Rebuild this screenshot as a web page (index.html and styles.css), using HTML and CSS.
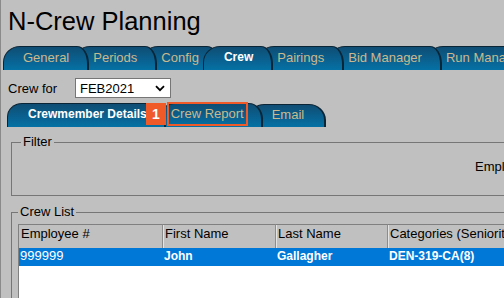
FILE: index.html
```html
<!DOCTYPE html>
<html>
<head>
<meta charset="utf-8">
<title>N-Crew Planning</title>
<link rel="stylesheet" href="styles.css">
</head>
<body>
<div class="page">
  <h1 class="title">N-Crew Planning</h1>
  <nav class="tabs">
    <span class="tab">General</span>
    <span class="tab">Periods</span>
    <span class="tab">Config</span>
    <span class="tab active">Crew</span>
    <span class="tab">Pairings</span>
    <span class="tab">Bid Manager</span>
    <span class="tab">Run Manager</span>
  </nav>
  <div class="crew-for">
    <span class="crew-for-label">Crew for</span>
    <div class="select">
      <span class="select-value">FEB2021</span>
      <svg class="chevron" width="10" height="7" viewBox="0 0 10 7"><path d="M1 1.2 L5 5.2 L9 1.2" fill="none" stroke="#000" stroke-width="1.8"/></svg>
    </div>
  </div>
  <div class="subtabs">
    <span class="subtab active details">Crewmember Details</span>
    <span class="subtab report">Crew Report</span>
    <span class="subtab email">Email</span>
    <span class="badge">1</span>
    <span class="highlight"></span>
  </div>
  <fieldset class="box filter">
    <legend>Filter</legend>
    <div class="filter-body">Employee #:</div>
  </fieldset>
  <fieldset class="box crewlist">
    <legend>Crew List</legend>
    <div class="grid">
      <div class="hcell">Employee #</div>
      <div class="hcell sep">First Name</div>
      <div class="hcell sep">Last Name</div>
      <div class="hcell sep">Categories (Seniority)</div>
      <div class="cell sel">999999</div>
      <div class="cell sel bold">John</div>
      <div class="cell sel bold">Gallagher</div>
      <div class="cell sel bold">DEN-319-CA(8)</div>
      <div class="filler"></div>
    </div>
  </fieldset>
</div>
</body>
</html>
```

FILE: styles.css
```css
html, body {
  margin: 0;
  padding: 0;
  background: #c0c0c0;
  overflow: hidden;
}
body {
  width: 504px;
  height: 298px;
  font-family: "Liberation Sans", Arial, sans-serif;
  font-size: 13px;
  color: #000;
}
.page {
  width: 620px;
  height: 298px;
  border-left: 1px solid #8a8a8a;
}
.title {
  margin: 0;
  padding: 4px 0 0 7px;
  height: 42px;
  font-size: 25.5px;
  line-height: 34px;
  font-weight: normal;
  color: #000;
}
.tabs {
  display: flex;
  padding-left: 2px;
  height: 24px;
}
.tab {
  position: relative;
  display: block;
  height: 21px;
  padding: 0 18px 2px 19px;
  margin-left: -16px;
  border: 1px solid #0a2536;
  border-right-width: 2px;
  border-bottom: 0;
  border-radius: 17px 12px 0 0 / 16px 18px 0 0;
  background: linear-gradient(#0f4d74, #0571a5);
  color: #cbb98d;
  line-height: 21px;
  white-space: nowrap;
}
.tab:first-child { margin-left: 0; }
.tab:nth-child(1) { z-index: 7; }
.tab:nth-child(2) { z-index: 6; }
.tab:nth-child(3) { z-index: 5; }
.tab:nth-child(4) { z-index: 4; }
.tab:nth-child(5) { z-index: 3; }
.tab:nth-child(6) { z-index: 2; }
.tab:nth-child(7) { z-index: 1; }
.tab.active {
  z-index: 10;
  color: #fff;
  font-weight: bold;
  font-size: 12px;
  padding-left: 20px;
}
.crew-for {
  display: flex;
  align-items: center;
  margin: 8px 0 0 7px;
  height: 20px;
}
.crew-for-label {
  width: 67px;
  line-height: 15px;
}
.select {
  box-sizing: border-box;
  width: 96px;
  height: 20px;
  border: 1px solid #767676;
  background: #fff;
  display: flex;
  align-items: center;
  justify-content: space-between;
  padding: 0 5px 0 4px;
}
.select-value { line-height: 17px; }
.chevron { display: block; }
.subtabs {
  position: relative;
  display: flex;
  margin: 5px 0 0 6px;
  height: 24px;
}
.subtab {
  position: relative;
  display: block;
  height: 20px;
  padding-bottom: 3px;
  border: 1px solid #0a2536;
  border-right-width: 2px;
  border-bottom: 0;
  border-radius: 15px 14px 0 0 / 14px 16px 0 0;
  background: linear-gradient(#0f4d74, #0571a5);
  color: #cbb98d;
  line-height: 20px;
  white-space: nowrap;
}
.subtab.active {
  color: #fff;
  font-weight: bold;
  font-size: 12px;
}
.details { z-index: 3; padding-left: 20px; padding-right: 17px; }
.report { z-index: 2; margin-left: -6px; padding-left: 10px; padding-right: 17px; }
.email {
  z-index: 1;
  margin-left: -14px;
  margin-top: 1px;
  height: 19px;
  padding-left: 22px;
  padding-right: 20px;
  border-radius: 15px 17px 0 0 / 14px 16px 0 0;
}
.badge {
  position: absolute;
  left: 139px;
  top: 0;
  width: 20px;
  height: 22px;
  background: #f05a28;
  color: #fff;
  font-weight: bold;
  font-size: 14px;
  text-align: center;
  line-height: 22px;
  z-index: 20;
}
.highlight {
  position: absolute;
  left: 160px;
  top: -1px;
  width: 77px;
  height: 20px;
  border: 2px solid #f05a28;
  z-index: 20;
}
.box {
  margin: 7px 0 0 10px;
  padding: 0 0 0 9px;
  border: 1px solid #767676;
  min-width: 0;
}
.box legend {
  padding: 0 2px;
  line-height: 16px;
}
.filter-body {
  height: 36px;
  padding: 9px 0 0 454px;
  line-height: 15px;
  white-space: nowrap;
}
.crewlist {
  margin-top: 8px;
  padding-left: 6px;
  padding-top: 4px;
}
.grid {
  display: grid;
  grid-template-columns: 143px 113px 112px 220px;
  border-left: 1px solid #808080;
  background: #fff;
}
.hcell {
  height: 23px;
  border-top: 1px solid #808080;
  background: #c0c0c0;
  padding-left: 2px;
  line-height: 18px;
  white-space: nowrap;
}
.hcell.sep {
  border-left: 1px solid #8c8c8c;
  box-shadow: inset 1px 0 #e4e4e4;
}
.cell {
  height: 18px;
  line-height: 15px;
  padding-left: 1px;
  white-space: nowrap;
}
.sel {
  background: #0078d7;
  color: #fff;
}
.cell + .cell { padding-left: 2px; }
.bold { font-weight: bold; font-size: 12px; line-height: 16px; }
.filler {
  grid-column: 1 / -1;
  height: 80px;
  background: #fff;
}
```
